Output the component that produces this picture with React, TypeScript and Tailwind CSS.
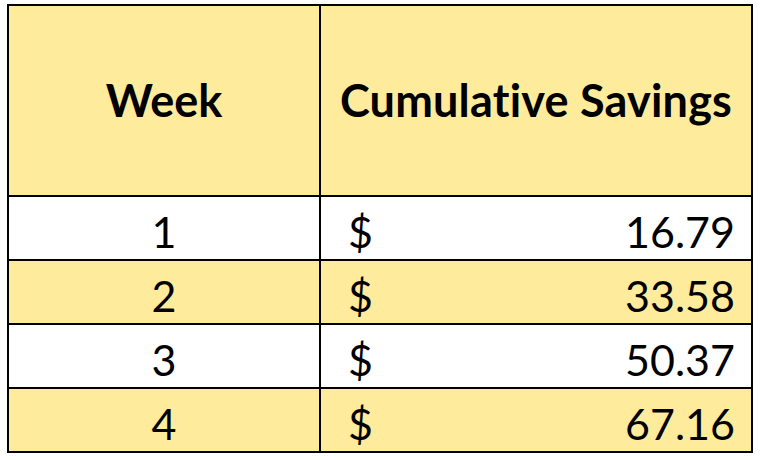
const rows = [
  { week: "1", amount: "16.79" },
  { week: "2", amount: "33.58" },
  { week: "3", amount: "50.37" },
  { week: "4", amount: "67.16" },
];

export default function App() {
  return (
    <div className="w-[760px] h-[460px] bg-white pt-[4px] pl-[7px] font-['Lato',sans-serif] text-black">
      <div className="grid grid-cols-[312px_432px] w-[746px] border-l-2 border-t-2 border-black">
        {/* header */}
        <div className="h-[191px] bg-[#FFEB9C] border-r-2 border-b-2 border-black flex items-center justify-center">
          <span className="text-[45px] font-bold">Week</span>
        </div>
        <div className="h-[191px] bg-[#FFEB9C] border-r-2 border-b-2 border-black flex items-center justify-center">
          <span className="text-[45px] font-bold tracking-[0.2px]">Cumulative Savings</span>
        </div>

        {rows.map((r, i) => {
          const bg = i % 2 === 0 ? "bg-white" : "bg-[#FFEB9C]";
          return [
            <div
              key={r.week + "w"}
              className={`h-[64px] ${bg} border-r-2 border-b-2 border-black flex items-center justify-center text-[43px] leading-none pt-[6px]`}
            >
              {r.week}
            </div>,
            <div
              key={r.week + "a"}
              className={`h-[64px] ${bg} border-r-2 border-b-2 border-black flex items-center justify-between pl-[27px] pr-[16px] text-[43px] leading-none pt-[6px]`}
            >
              <span>$</span>
              <span>{r.amount}</span>
            </div>,
          ];
        })}
      </div>
    </div>
  );
}
